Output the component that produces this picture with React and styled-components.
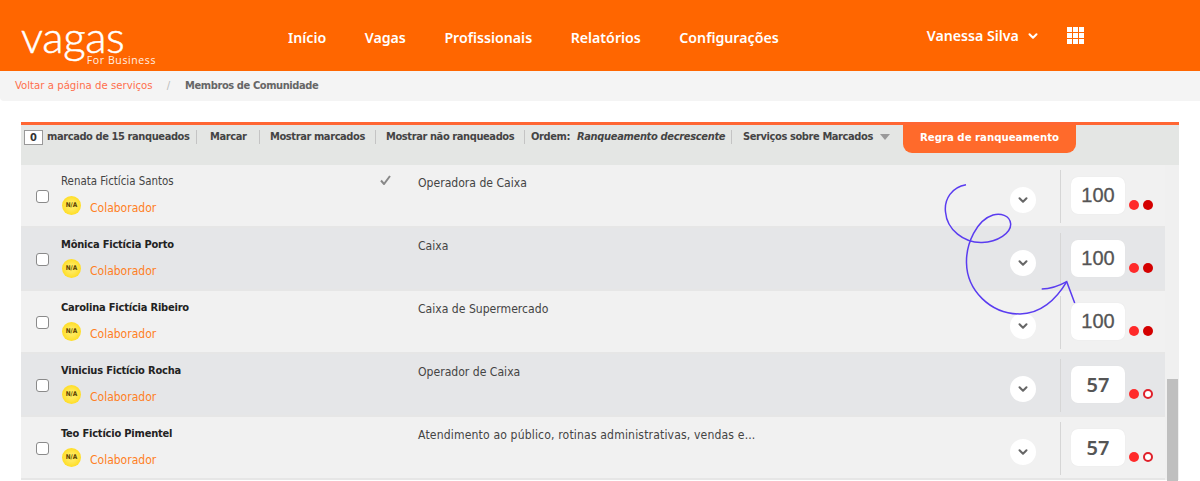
import React from 'react';
import styled, { createGlobalStyle } from 'styled-components';
import { ChevronDown } from 'lucide-react';

const GlobalStyle = createGlobalStyle`
  html, body {
    margin: 0;
    padding: 0;
    background: #fff;
  }
  body {
    font-family: 'DejaVu Sans Condensed', 'DejaVu Sans', sans-serif;
  }
`;

const Page = styled.div`
  position: relative;
  width: 1200px;
  height: 481px;
  overflow: hidden;
`;

const Header = styled.header`
  display: flex;
  align-items: flex-start;
  height: 71px;
  padding-left: 21px;
  background: #ff6600;
  color: #fff;
`;

const Logo = styled.div`
  display: flex;
  flex-direction: column;
  align-items: flex-end;
  width: 135px;
  margin-top: 19px;
  margin-right: 132px;
`;

const LogoWord = styled.span`
  align-self: flex-start;
  font-family: Lato, sans-serif;
  font-weight: 300;
  font-size: 44px;
  line-height: 34px;
  letter-spacing: -0.4px;
  -webkit-text-stroke: 0.5px #fff;
`;

const LogoSub = styled.span`
  margin-top: 2px;
  font-family: 'Open Sans', sans-serif;
  font-size: 10.5px;
  line-height: 11px;
  letter-spacing: 0.6px;
  opacity: 0.9;
`;

const Nav = styled.nav`
  display: flex;
  gap: 38.5px;
  margin-top: 28px;
`;

const NavLink = styled.a`
  font-family: 'Noto Sans', sans-serif;
  font-weight: 600;
  font-size: 14.2px;
  line-height: 20px;
`;

const User = styled.div`
  display: flex;
  align-items: center;
  gap: 7px;
  margin-top: 26px;
  margin-left: 148px;
  font-family: 'Noto Sans', sans-serif;
  font-weight: 600;
  font-size: 14.2px;
  line-height: 20px;
`;

const AppGrid = styled.div`
  display: grid;
  grid-template-columns: repeat(3, 5px);
  grid-auto-rows: 5px;
  gap: 1px;
  margin-top: 27px;
  margin-left: 27px;
  & > i {
    background: #fff;
  }
`;

const Breadcrumb = styled.div`
  display: flex;
  align-items: center;
  height: 30px;
  padding: 0 0 2px 15px;
  box-sizing: border-box;
  background: #f4f4f4;
  border-radius: 0 0 0 4px;
  font-size: 11.3px;
`;

const CrumbLink = styled.a`
  color: #ff6f4d;
`;

const CrumbSep = styled.span`
  margin: 0 15px 0 14px;
  color: #bbb;
`;

const CrumbCurrent = styled.span`
  color: #666;
  font-size: 11px;
  font-weight: 700;
  letter-spacing: -0.4px;
`;

const Panel = styled.section`
  width: 1158px;
  margin: 21px 0 0 21px;
  border-top: 3px solid #ff6633;
  background: #f0f0f0;
`;

const Toolbar = styled.div`
  display: flex;
  align-items: flex-start;
  height: 40px;
  background: #e4e6e4;
  color: #444;
  font-size: 11px;
  font-weight: 700;
`;

const Counter = styled.span`
  box-sizing: border-box;
  width: 19px;
  height: 15px;
  margin: 5px 4px 0 3px;
  background: #fff;
  border: 1px solid #999;
  color: #333;
  text-align: center;
  line-height: 13px;
`;

const ToolItem = styled.span`
  display: flex;
  align-items: center;
  gap: 7px;
  box-sizing: border-box;
  width: ${(p) => p.$width}px;
  height: 14px;
  margin-top: 5px;
  padding-left: ${(p) => p.$left}px;
  border-right: ${(p) => (p.$last ? 'none' : '1px solid #c4c4c4')};
  white-space: nowrap;
  letter-spacing: -0.4px;
  line-height: 14px;
`;

const Emph = styled.em`
  font-style: italic;
  letter-spacing: -0.33px;
`;

const Triangle = styled.i`
  width: 0;
  height: 0;
  border-left: 5px solid transparent;
  border-right: 5px solid transparent;
  border-top: 6px solid #999;
`;

const RuleTab = styled.button`
  width: 173px;
  height: 28px;
  padding: 0 0 4px;
  border: 0;
  border-radius: 0 0 9px 9px;
  background: #ff6a2b;
  color: #fff;
  font: inherit;
  font-size: 11.3px;
  font-weight: 700;
`;

const Body = styled.div`
  display: flex;
`;

const List = styled.div`
  width: 1144px;
`;

const Row = styled.div`
  display: flex;
  box-sizing: border-box;
  height: 63px;
  border-bottom: 2px solid #e6e6e6;
  background: ${(p) => (p.$alt ? '#e5e6e8' : '#f1f1f1')};
`;

const CheckCell = styled.div`
  display: flex;
  align-items: center;
  width: 40px;
  padding: 1px 0 0 15px;
  box-sizing: border-box;
`;

const Box = styled.input.attrs({ type: 'checkbox' })`
  appearance: none;
  box-sizing: border-box;
  width: 13px;
  height: 13px;
  margin: 0;
  background: #fff;
  border: 1.5px solid #8a8a8a;
  border-radius: 3px;
`;

const Person = styled.div`
  display: flex;
  flex-direction: column;
  width: 357px;
  padding-top: 10px;
  box-sizing: border-box;
`;

const NameLine = styled.div`
  display: flex;
  justify-content: space-between;
  height: 14px;
  padding-right: 27px;
`;

const Name = styled.span`
  color: ${(p) => (p.$read ? '#444' : '#222')};
  font-size: ${(p) => (p.$read ? 11.4 : 11)}px;
  font-weight: ${(p) => (p.$read ? 400 : 700)};
  letter-spacing: ${(p) => (p.$read ? 0 : -0.2)}px;
  line-height: ${(p) => (p.$read ? 12 : 14)}px;
`;

const Role = styled.div`
  display: flex;
  align-items: center;
  gap: 9px;
  margin-top: 6px;
  padding-left: 1px;
`;

const Badge = styled.span`
  display: flex;
  align-items: center;
  justify-content: center;
  width: 19px;
  height: 19px;
  border-radius: 50%;
  background: radial-gradient(circle, #ffe95a 30%, #ffd500 100%);
  color: #5b4300;
  font-size: 6.5px;
  font-weight: 700;
`;

const RoleName = styled.span`
  margin-top: 6px;
  color: #ff7f24;
  font-size: 12px;
`;

const Title = styled.div`
  flex: 1;
  padding-top: 11px;
  color: #444;
  font-size: 12.1px;
  letter-spacing: ${(p) => (p.$loose ? 0.15 : 0)}px;
  line-height: 14px;
`;

const Expand = styled.button`
  display: flex;
  align-items: center;
  justify-content: center;
  width: 26px;
  height: 26px;
  margin: 22px 24px 0 0;
  padding: 0;
  border: 0;
  border-radius: 50%;
  background: #fff;
  color: #666;
`;

const ScoreCell = styled.div`
  display: flex;
  align-items: flex-start;
  width: 105px;
  height: 53px;
  margin-top: 5px;
  padding: 7px 0 0 10px;
  box-sizing: border-box;
  border-left: 1px solid #d6d6d6;
`;

const Score = styled.div`
  display: flex;
  align-items: center;
  justify-content: center;
  width: 54px;
  height: 37px;
  box-sizing: border-box;
  border-radius: 7px;
  background: #fff;
  box-shadow: 0 0 1px #ddd;
  color: #555;
  font-family: ${(p) => (p.$small ? "'Noto Sans'" : "'Liberation Sans'")}, sans-serif;
  font-size: 20px;
  font-weight: ${(p) => (p.$small ? 600 : 400)};
  -webkit-text-stroke: ${(p) => (p.$small ? 0 : 0.3)}px #555;
`;

const Dots = styled.div`
  display: flex;
  gap: 4px;
  margin: 23px 0 0 4px;
`;

const Dot = styled.i`
  box-sizing: border-box;
  width: 10px;
  height: 10px;
  border-radius: 50%;
  background: ${(p) => (p.$hollow ? '#fff' : p.$dark ? '#d40000' : '#ff2a2a')};
  border: ${(p) => (p.$hollow ? '2px solid #e0202a' : 'none')};
`;

const Track = styled.div`
  flex: 1;
  position: relative;
  background: #f0f0f0;
`;

const Thumb = styled.div`
  position: absolute;
  top: 214px;
  left: 2px;
  width: 11px;
  height: 200px;
  background: #bfbfbf;
`;

const Scribble = styled.svg`
  position: absolute;
  top: 0;
  left: 0;
  pointer-events: none;
`;

const rows = [
  { name: 'Renata Fictícia Santos', title: 'Operadora de Caixa', score: 100, read: true },
  { name: 'Mônica Fictícia Porto', title: 'Caixa', score: 100, alt: true },
  { name: 'Carolina Fictícia Ribeiro', title: 'Caixa de Supermercado', score: 100 },
  { name: 'Vinicius Fictício Rocha', title: 'Operador de Caixa', score: 57, alt: true },
  { name: 'Teo Fictício Pimentel', title: 'Atendimento ao público, rotinas administrativas, vendas e...', score: 57, loose: true },
];

const App = () => (
  <Page>
    <GlobalStyle />
    <Header>
      <Logo>
        <LogoWord>vagas</LogoWord>
        <LogoSub>For Business</LogoSub>
      </Logo>
      <Nav>
        <NavLink>Início</NavLink>
        <NavLink>Vagas</NavLink>
        <NavLink>Profissionais</NavLink>
        <NavLink>Relatórios</NavLink>
        <NavLink>Configurações</NavLink>
      </Nav>
      <User>
        Vanessa Silva
        <ChevronDown size={14} strokeWidth={3.5} />
      </User>
      <AppGrid>
        {Array.from({ length: 9 }, (_, i) => <i key={i} />)}
      </AppGrid>
    </Header>
    <Breadcrumb>
      <CrumbLink>Voltar a página de serviços</CrumbLink>
      <CrumbSep>/</CrumbSep>
      <CrumbCurrent>Membros de Comunidade</CrumbCurrent>
    </Breadcrumb>
    <Panel>
      <Toolbar>
        <Counter>0</Counter>
        <ToolItem $left={0} $width={150}>marcado de 15 ranqueados</ToolItem>
        <ToolItem $left={13} $width={63}>Marcar</ToolItem>
        <ToolItem $left={10} $width={116}>Mostrar marcados</ToolItem>
        <ToolItem $left={10} $width={149}>Mostrar não ranqueados</ToolItem>
        <ToolItem $left={6} $width={207}>
          Ordem: <Emph>Ranqueamento decrescente</Emph>
        </ToolItem>
        <ToolItem $left={11} $width={171} $last>
          Serviços sobre Marcados <Triangle />
        </ToolItem>
        <RuleTab>Regra de ranqueamento</RuleTab>
      </Toolbar>
      <Body>
        <List>
          {rows.map((r) => (
            <Row key={r.name} $alt={r.alt}>
              <CheckCell><Box /></CheckCell>
              <Person>
                <NameLine>
                  <Name $read={r.read}>{r.name}</Name>
                  {r.read && (
                    <svg width="11" height="10" viewBox="0 0 11 10">
                      <path d="M1 5.5 L4 9 L10 1" fill="none" stroke="#888" strokeWidth="2" />
                    </svg>
                  )}
                </NameLine>
                <Role>
                  <Badge>N/A</Badge>
                  <RoleName>Colaborador</RoleName>
                </Role>
              </Person>
              <Title $loose={r.loose}>{r.title}</Title>
              <Expand><ChevronDown size={14} strokeWidth={3.5} /></Expand>
              <ScoreCell>
                <Score $small={r.score < 100}>{r.score}</Score>
                <Dots>
                  <Dot />
                  <Dot $dark={r.score === 100} $hollow={r.score < 100} />
                </Dots>
              </ScoreCell>
            </Row>
          ))}
        </List>
        <Track><Thumb /></Track>
      </Body>
    </Panel>
    <Scribble width="1200" height="481" viewBox="0 0 1200 481" fill="none" stroke="#5a3cf0" strokeWidth="1.5">
      <path d="M966 184.7 C952 187 944 199 945.5 212 C947 230 964 243 982 242.5 C998 242 1011 233 1010.7 224 C1010 215 1000 213 993 215 C977 220 966 243 966.5 263 C967 290 990 314 1020 314 C1040 314 1056 300 1066.7 281.7" />
      <path d="M1041.7 289 C1050 289 1059 286 1066.7 281.7 L1074.7 303" />
    </Scribble>
  </Page>
);

export default App;
